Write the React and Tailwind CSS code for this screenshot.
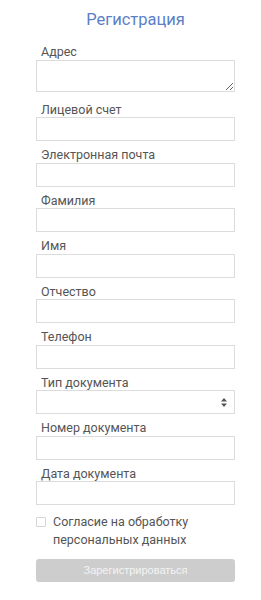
import React from 'react';

const fields = [
  'Лицевой счет',
  'Электронная почта',
  'Фамилия',
  'Имя',
  'Отчество',
  'Телефон',
];

function Label({ children }) {
  return (
    <label className="block pl-[5px] text-[12.5px] leading-[15.5px] text-[#555]">
      {children}
    </label>
  );
}

function Input() {
  return (
    <input
      type="text"
      className="block w-full h-[24px] border border-[#dcdcdc] bg-white outline-none px-2 text-[13px]"
    />
  );
}

export default function App() {
  return (
    <div className="min-h-screen bg-white" style={{ fontFamily: 'Roboto, "Noto Sans", sans-serif' }}>
      <div className="ml-[36px] w-[199px] pt-[9px]">
        <h1 className="text-center text-[16.5px] leading-[22px] text-[#5b80c8] font-normal">
          Регистрация
        </h1>

        <div className="mt-[13px] pb-[4px]">
          <Label>Адрес</Label>
          <textarea className="block w-full h-[32px] border border-[#dcdcdc] bg-white outline-none px-2 text-[13px]" />
        </div>

        {fields.map((f) => (
          <div key={f} className="mt-[6px]">
            <Label>{f}</Label>
            <Input />
          </div>
        ))}

        <div className="mt-[6px]">
          <Label>Тип документа</Label>
          <div className="relative h-[24px] border border-[#dcdcdc] bg-white">
            <svg
              className="absolute right-[7px] top-[7px]"
              width="6"
              height="9"
              viewBox="0 0 6 9"
            >
              <path d="M3 0 L6 3.5 L0 3.5 Z" fill="#555" />
              <path d="M3 9 L6 5.5 L0 5.5 Z" fill="#555" />
            </svg>
          </div>
        </div>

        <div className="mt-[6px]">
          <Label>Номер документа</Label>
          <Input />
        </div>

        <div className="mt-[6px]">
          <Label>Дата документа</Label>
          <Input />
        </div>

        <div className="mt-[8px] flex items-start">
          <span className="mt-[4px] w-[10px] h-[10px] border border-[#d6d6d6] rounded-[1px] bg-white shrink-0" />
          <span className="ml-[7px] text-[12.5px] leading-[18px] text-[#555]">
            Согласие на обработку персональных данных
          </span>
        </div>

        <button
          type="button"
          className="mt-[10px] w-full h-[23px] rounded-[3px] bg-[#cdcdcd] text-[#f4f4f4] text-[11px]"
          style={{ fontFamily: '"Liberation Sans", Arial, sans-serif' }}
        >
          Зарегистрироваться
        </button>
      </div>
    </div>
  );
}
